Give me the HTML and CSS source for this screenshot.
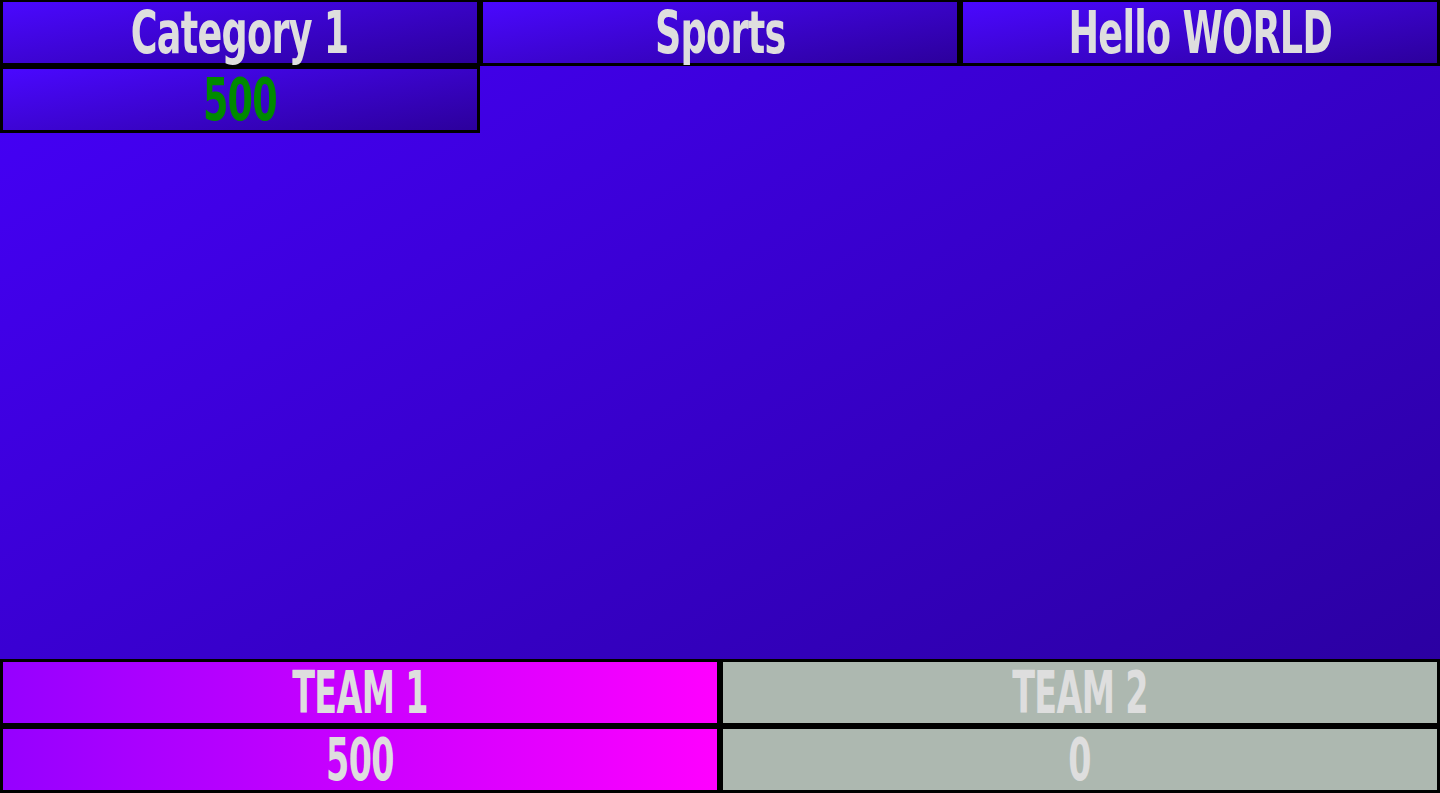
FILE: index.html
```html
<!DOCTYPE html>
<html lang="en">

<head>
    <meta charset="UTF-8">
    <title>Jeopardy Board</title>
    <link rel="stylesheet" href="styles.css">
</head>

<body>
    <div class="board">
        <div class="column">
            <div class="cell category"><span class="label">Category 1</span></div>
            <div class="cell question"><span class="label">500</span></div>
        </div>
        <div class="column">
            <div class="cell category"><span class="label">Sports</span></div>
        </div>
        <div class="column">
            <div class="cell category"><span class="label">Hello WORLD</span></div>
        </div>
    </div>

    <div class="teams">
        <div class="team team-active">
            <div class="team-cell"><span class="label">TEAM 1</span></div>
            <div class="team-cell"><span class="label">500</span></div>
        </div>
        <div class="team">
            <div class="team-cell"><span class="label label-caps">TEAM 2</span></div>
            <div class="team-cell"><span class="label">0</span></div>
        </div>
    </div>
</body>

</html>
```

FILE: styles.css
```css
html, body {
    height: 100%;
}

body {
    margin: 0;
    display: flex;
    flex-direction: column;
    overflow: hidden;
    font-family: Impact, "DejaVu Sans Condensed", sans-serif;
    font-weight: bold;
    font-stretch: condensed;
    color: #dedede;
    background: linear-gradient(to bottom right, #4600fb, #29009a);
}

.board {
    flex: 1;
    display: grid;
    grid-template-columns: repeat(3, 1fr);
    align-items: start;
}

.column {
    display: flex;
    flex-direction: column;
}

/* 字体没有 Impact，只能横向压窄来凑 */
.label {
    display: inline-block;
    transform: scaleX(0.7);
    letter-spacing: -1px;
}

.team-cell .label {
    transform: scaleX(0.64);
}

.cell {
    box-sizing: border-box;
    height: 66px;
    border: 3px solid #000;
    border-top-width: 2px;
    display: flex;
    align-items: center;
    justify-content: center;
    font-size: 58px;
    background: linear-gradient(170deg, #4a08ff, #2c009c);
}

.question {
    height: 67px;
    border-top-width: 3px;
    color: #008a00;
}

.teams {
    display: grid;
    grid-template-columns: 1fr 1fr;
}

.team {
    background: #adb8b0;
}

.team-active {
    background: linear-gradient(to right, #9500ff, #ff00ff);
}

.team-cell {
    box-sizing: border-box;
    height: 67px;
    border: 3px solid #000;
    display: flex;
    align-items: center;
    justify-content: center;
    font-size: 58px;
}
```
